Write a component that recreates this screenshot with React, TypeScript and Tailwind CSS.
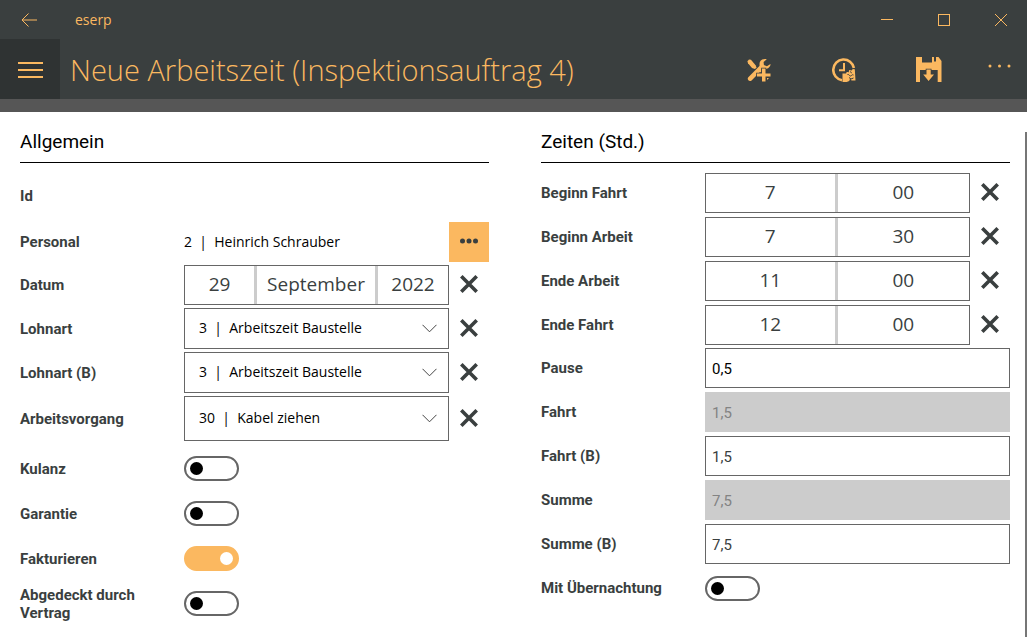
import { useState, type ReactNode } from "react";

const wageTypes = ["3\u00a0 |\u00a0 Arbeitszeit Baustelle", "4\u00a0 |\u00a0 Fahrzeit"];
const operations = ["30\u00a0 |\u00a0 Kabel ziehen", "40\u00a0 |\u00a0 Montage"];

function ToolsIcon() {
  return (
    <svg width="24" height="24" viewBox="0 0 24 24" fill="currentColor" aria-hidden="true">
      <path d="M.4 3.2 2 1.4l2 .3 4.600 5.500 1 2.600-1.700 1.300-2.900-1.100L1 5.200z" />
      <path d="M19.800 1.300c-3.500-1.200-7.600 1.300-7.300 5 .1.900.2 1.500-.3 2L1.300 19.200c-1.700 1.700.7 5.300 3.300 3.200l8.100-8.200h1.800V11h3.900c2.600-.2 5.200-2.500 5.100-5l-3.600 2.200-3-1.200-.3-3.100z" />
      <path
        d="M15 10.500h3.500v5h5v3h-5v5H15v-5h-5v-3h5z"
        stroke="#3a3f3f"
        strokeWidth="1.600"
        paintOrder="stroke"
      />
      <path d="M20 20h2l-2 2z" />
    </svg>
  );
}

function ClockIcon() {
  return (
    <svg width="24" height="24" viewBox="0 0 24 24" aria-hidden="true">
      <path d="M10 22.200A10.400 10.400 0 1 1 21.900 10" fill="none" stroke="currentColor" strokeWidth="2.600" />
      <path d="M12 5v7.200H7" fill="none" stroke="currentColor" strokeWidth="2" />
      <path
        d="M10.500 15.400h3.600c.2-1.200 1.500-1.700 2.600-.9l.4-2.600 2.500.7 1.200-1.600 2 .3.700 11.300h-4l-1.300-2-1 2.500-2.500.8h-4.200z"
        fill="currentColor"
      />
      <path d="M15.500 16.500c1.500-.5 1.800 1.500 3 1.500s1.500-2 3-1M17 19.500l2 1.500 2.500-1M18 13.500l1.800 1.500" fill="none" stroke="#3a3f3f" strokeWidth="1" />
    </svg>
  );
}

function SaveIcon() {
  return (
    <svg width="26" height="26" viewBox="0 0 26 26" fill="currentColor" aria-hidden="true">
      <path d="M0 0h6v5.500h10V0h2v4.500h2V0h2.500L25.500 4v21h-3.800V13H4v12H0z" />
      <path
        d="M10.500 12.500h4.200v5H18L12.600 24l-5.400-6.500h3.300z"
        stroke="#3a3f3f"
        strokeWidth="1.600"
        paintOrder="stroke"
      />
    </svg>
  );
}

function Row({ id, label, height = "h-10", children }: { id?: string; label: string; height?: string; children?: ReactNode }) {
  return (
    <div className={`grid grid-cols-[164px_minmax(0,1fr)_40px] items-center ${height}`}>
      <label htmlFor={id} className="text-[15px] leading-[18px] font-bold text-[#3a3f3f]">
        {label}
      </label>
      {children}
    </div>
  );
}

function ClearButton({ label }: { label: string }) {
  return (
    <button type="button" aria-label={`${label} leeren`} className="grid h-10 place-items-center pb-0.5 text-[#3a3f3f]">
      <svg width="18" height="18" viewBox="0 0 18 18" fill="none" stroke="currentColor" strokeWidth="3.600" aria-hidden="true">
        <path d="M1.300 1.300 16.700 16.700M16.700 1.300 1.300 16.700" />
      </svg>
    </button>
  );
}

function Picker({ id, label, parts, columns }: { id: string; label: string; parts: string[]; columns: string }) {
  return (
    <Row id={id} label={label}>
      <button
        id={id}
        type="button"
        className={`grid h-10 items-stretch divide-x-3 divide-[#ccc] border border-[#666] font-[Open_Sans,sans-serif] text-[19px] text-[#3a3f3f] ${columns}`}
      >
        {parts.map((part, i) => (
          <span key={i} className="leading-9">
            {part}
          </span>
        ))}
      </button>
      <ClearButton label={label} />
    </Row>
  );
}

function SelectRow({ id, label, options, height }: { id: string; label: string; options: string[]; height: string }) {
  return (
    <Row id={id} label={label} height={height}>
      <div className="relative h-full">
        <select id={id} className="h-full w-full appearance-none border border-[#666] bg-white pr-8 pb-0.5 pl-3.5 font-[Open_Sans,sans-serif] text-sm text-black">
          {options.map((option) => (
            <option key={option}>{option}</option>
          ))}
        </select>
        <svg
          className="pointer-events-none absolute inset-y-0 right-3 my-auto"
          width="15"
          height="9"
          viewBox="0 0 15 9"
          fill="none"
          stroke="#444"
          aria-hidden="true"
        >
          <path d="M.5.8 7.500 7.800 14.500.8" />
        </svg>
      </div>
      <ClearButton label={label} />
    </Row>
  );
}

function TextRow({ id, label, value, tone = "text-[#3a3f3f]", disabled }: { id: string; label: string; value: string; tone?: string; disabled?: boolean }) {
  return (
    <Row id={id} label={label}>
      <input
        id={id}
        type="text"
        defaultValue={value}
        disabled={disabled}
        className={`col-span-2 h-10 border border-[#666] bg-white px-1.5 pt-0.5 text-[15px] disabled:border-[#ccc] disabled:bg-[#ccc] disabled:text-[#838383] ${tone}`}
      />
    </Row>
  );
}

function ToggleRow({ id, label, on = false, height }: { id: string; label: string; on?: boolean; height?: string }) {
  const [checked, setChecked] = useState(on);
  return (
    <Row id={id} label={label} height={height}>
      <input
        id={id}
        type="checkbox"
        role="switch"
        checked={checked}
        onChange={(e) => setChecked(e.target.checked)}
        className="flex h-[25px] w-[55px] appearance-none items-center rounded-full border-2 border-[#666] bg-white px-1 before:size-[13px] before:rounded-full before:bg-black checked:justify-end checked:border-[#fbb860] checked:bg-[#fbb860] checked:before:bg-white"
      />
    </Row>
  );
}

function Section({ title, children }: { title: string; children: ReactNode }) {
  return (
    <section>
      <h2 className="mb-2.5 border-b border-black pt-4 pb-1.5 text-[19px] leading-7 text-black">{title}</h2>
      {children}
    </section>
  );
}

export default function App() {
  return (
    <div className="flex min-h-screen flex-col bg-white font-[Roboto,sans-serif]">
      <header className="bg-[#3a3f3f] text-[#fbb860]">
        <div className="flex h-[39px] items-center gap-[5px]">
          <button type="button" aria-label="Zurück" className="grid w-[58px] place-items-center">
            <svg width="16" height="14" viewBox="0 0 16 14" fill="none" stroke="currentColor" aria-hidden="true">
              <path d="M7.500.5 1 7l6.500 6.500M1 7h15" />
            </svg>
          </button>
          <span className="flex-1 pl-3 font-[Open_Sans,sans-serif] text-sm">eserp</span>
          <button type="button" aria-label="Minimieren" className="grid h-full w-[52px] place-items-center">
            <span className="h-px w-3 bg-current" />
          </button>
          <button type="button" aria-label="Maximieren" className="grid h-full w-[52px] place-items-center">
            <span className="size-3 border border-current" />
          </button>
          <button type="button" aria-label="Schließen" className="grid h-full w-[52px] place-items-center">
            <svg width="12" height="12" viewBox="0 0 12 12" stroke="currentColor" aria-hidden="true">
              <path d="M0 0 12 12M12 0 0 12" />
            </svg>
          </button>
        </div>
        <div className="flex h-[60px] items-center">
          <button type="button" aria-label="Menü" className="grid h-full w-[60px] place-content-center gap-[5px] bg-[#2f3333] pt-0.5">
            <span className="h-0.5 w-[25px] bg-current" />
            <span className="h-0.5 w-[25px] bg-current" />
            <span className="h-0.5 w-[25px] bg-current" />
          </button>
          <h1 className="flex-1 pt-0.5 pl-2.5 font-[Open_Sans,sans-serif] text-[29px] font-light">Neue Arbeitszeit (Inspektionsauftrag 4)</h1>
          <button type="button" aria-label="Werkzeug hinzufügen" className="grid h-full w-[85px] place-items-center pt-0.5">
            <ToolsIcon />
          </button>
          <button type="button" aria-label="Arbeitszeit" className="grid h-full w-[85px] place-items-center pt-0.5">
            <ClockIcon />
          </button>
          <button type="button" aria-label="Speichern" className="grid h-full w-[85px] place-items-center pt-0.5">
            <SaveIcon />
          </button>
          <button type="button" aria-label="Mehr" className="grid h-full w-[56px] place-items-center pb-1.5">
            <svg width="23" height="4" viewBox="0 0 23 4" fill="currentColor" aria-hidden="true">
              <circle cx="2" cy="2" r="1.500" />
              <circle cx="11.500" cy="2" r="1.500" />
              <circle cx="21" cy="2" r="1.500" />
            </svg>
          </button>
        </div>
      </header>
      <div className="h-[13px] bg-[#565656]" />

      <div className="flex flex-1">
        <main className="grid flex-1 grid-cols-2 gap-[52px] pr-[15px] pl-5">
          <Section title="Allgemein">
            <div className="flex flex-col gap-[3px]">
              <Row label="Id" height="h-[46px]" />
              <Row id="personal" label="Personal">
                <span className="font-[Open_Sans,sans-serif] text-sm text-black">2&nbsp; |&nbsp; Heinrich Schrauber</span>
                <button id="personal" type="button" className="grid h-10 place-items-center bg-[#fbb860] pb-0.5 text-[#3a3f3f]">
                  <svg width="18" height="6" viewBox="0 0 18 6" fill="currentColor" aria-hidden="true">
                    <circle cx="2.500" cy="3" r="2.500" />
                    <circle cx="9" cy="3" r="2.500" />
                    <circle cx="15.500" cy="3" r="2.500" />
                  </svg>
                </button>
              </Row>
              <Picker id="datum" label="Datum" parts={["29", "September", "2022"]} columns="grid-cols-[72fr_121fr_70fr]" />
              <SelectRow id="lohnart" label="Lohnart" options={wageTypes} height="h-[41px]" />
              <SelectRow id="lohnart-b" label="Lohnart (B)" options={wageTypes} height="h-[41px]" />
              <SelectRow id="arbeitsvorgang" label="Arbeitsvorgang" options={operations} height="h-[45px]" />
            </div>
            <div className="mt-[5px]">
              <ToggleRow id="kulanz" label="Kulanz" height="h-[45px]" />
              <ToggleRow id="garantie" label="Garantie" height="h-[45px]" />
              <ToggleRow id="fakturieren" label="Fakturieren" height="h-[45px]" on />
              <ToggleRow id="vertrag" label="Abgedeckt durch Vertrag" height="h-[45px]" />
            </div>
          </Section>

          <Section title="Zeiten (Std.)">
            <div className="mb-[3px] flex flex-col gap-1">
              <Picker id="beginn-fahrt" label="Beginn Fahrt" parts={["7", "00"]} columns="grid-cols-2" />
              <Picker id="beginn-arbeit" label="Beginn Arbeit" parts={["7", "30"]} columns="grid-cols-2" />
              <Picker id="ende-arbeit" label="Ende Arbeit" parts={["11", "00"]} columns="grid-cols-2" />
              <Picker id="ende-fahrt" label="Ende Fahrt" parts={["12", "00"]} columns="grid-cols-2" />
            </div>
            <div className="flex flex-col gap-1">
              <TextRow id="pause" label="Pause" value="0,5" tone="text-black" />
              <TextRow id="fahrt" label="Fahrt" value="1,5" disabled />
              <TextRow id="fahrt-b" label="Fahrt (B)" value="1,5" />
              <TextRow id="summe" label="Summe" value="7,5" disabled />
              <TextRow id="summe-b" label="Summe (B)" value="7,5" />
              <ToggleRow id="uebernachtung" label="Mit Übernachtung" />
            </div>
          </Section>
        </main>
        <div className="mt-5 w-0.5 bg-[#767676]" />
      </div>
    </div>
  );
}
